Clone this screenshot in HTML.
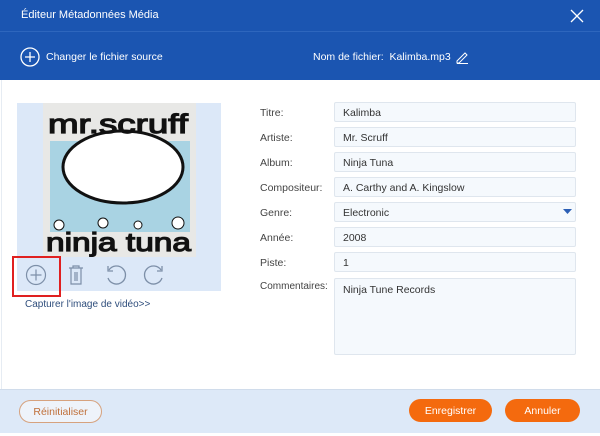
<!DOCTYPE html>
<html><head><meta charset="utf-8"><style>
*{margin:0;padding:0;box-sizing:border-box}
body{width:600px;height:436px;background:#fff;font-family:"Liberation Sans",sans-serif;position:relative;overflow:hidden;font-size:11px;color:#333}
.abs{position:absolute}
.hdr{left:0;top:0;width:600px;height:80px;background:#1b55b1}
.lbl{left:260px;font-size:10.5px;color:#444}
.inp{left:334px;width:242px;height:20px;border:1px solid #dfe6ee;background:#f5f9fd;border-radius:2px;padding:4px 8px;font-size:10.5px;color:#333}
.btn{border-radius:12px;font-size:10.5px;height:23px;display:flex;align-items:center;justify-content:center}
</style></head><body>
<div class="abs hdr"></div>
<div class="abs" style="left:0;top:31px;width:600px;height:1px;background:#2e66bd"></div>
<div class="abs" style="left:21px;top:9px;color:#fff;font-size:11px">Éditeur Métadonnées Média</div>
<svg class="abs" style="left:570px;top:9px" width="14" height="14"><path d="M1 1L13 13M13 1L1 13" stroke="#fff" stroke-width="1.3"/></svg>
<svg class="abs" style="left:20px;top:47px" width="20" height="20"><circle cx="10" cy="10" r="9" fill="none" stroke="#fff" stroke-width="1.3"/><path d="M10 5V15M5 10H15" stroke="#fff" stroke-width="1.3"/></svg>
<div class="abs" style="left:46px;top:51px;color:#fff;font-size:10.5px">Changer le fichier source</div>
<div class="abs" style="left:313px;top:51px;color:#fff;font-size:10.5px">Nom de fichier:&nbsp; Kalimba.mp3</div>
<svg class="abs" style="left:455px;top:50px" width="14" height="14"><path d="M2 11L10 3L12 5L4 13L2 13Z" fill="none" stroke="#fff" stroke-width="1"/><path d="M2 13.5H13" stroke="#fff"/></svg>
<div class="abs" style="left:1px;top:80px;width:1px;height:310px;background:#e6ecf3"></div>

<div class="abs" style="left:17px;top:103px;width:204px;height:188px;background:#dce8f8"></div>
<div class="abs" style="left:43px;top:103px;width:153px;height:154px;background:#e8e8e6"></div>
<div class="abs" style="left:50px;top:141px;width:140px;height:91px;background:#a9d3e3"></div>
<svg class="abs" style="left:43px;top:103px" width="153" height="154">
<ellipse cx="80" cy="64" rx="60" ry="36" fill="#fff" stroke="#111" stroke-width="3"/>
<circle cx="16" cy="122" r="5" fill="#fff" stroke="#111"/><circle cx="60" cy="120" r="5" fill="#fff" stroke="#111"/><circle cx="95" cy="122" r="4" fill="#fff" stroke="#111"/><circle cx="135" cy="120" r="6" fill="#fff" stroke="#111"/>
<text x="5" y="30" font-family="Liberation Sans" font-size="27" stroke="#111" stroke-width="1.2" fill="#111" textLength="140" lengthAdjust="spacingAndGlyphs">mr.scruff</text>
<text x="3" y="148" font-family="Liberation Sans" font-size="26" stroke="#111" stroke-width="1.2" fill="#111" textLength="145" lengthAdjust="spacingAndGlyphs">ninja tuna</text>
</svg>
<div class="abs" style="left:12px;top:256px;width:49px;height:41px;border:2px solid #e02020"></div>
<svg class="abs" style="left:25px;top:264px" width="22" height="22"><circle cx="11" cy="11" r="9.5" fill="none" stroke="#7d8fa8" stroke-width="1.2"/><path d="M11 5.5V16.5M5.5 11H16.5" stroke="#7d8fa8" stroke-width="1.2"/></svg>
<svg class="abs" style="left:66px;top:264px" width="20" height="22"><path d="M3 4H17M7 4V2H13V4M5 4V20H15V4M9 8V17M11 8V17" fill="none" stroke="#7d8fa8" stroke-width="1.2"/></svg>
<svg class="abs" style="left:104px;top:264px" width="24" height="22"><path d="M5 6A9 9 0 1 1 4 14" fill="none" stroke="#7d8fa8" stroke-width="1.3"/><path d="M4 2V7H9" fill="none" stroke="#7d8fa8" stroke-width="1.3"/></svg>
<svg class="abs" style="left:142px;top:264px" width="24" height="22"><path d="M19 6A9 9 0 1 0 20 14" fill="none" stroke="#7d8fa8" stroke-width="1.3"/><path d="M20 2V7H15" fill="none" stroke="#7d8fa8" stroke-width="1.3"/></svg>
<div class="abs" style="left:25px;top:299px;font-size:10px;color:#2f4e7c">Capturer l'image de vidéo&gt;&gt;</div>

<div class="abs lbl" style="top:107px">Titre:</div><div class="abs inp" style="top:102px">Kalimba</div>
<div class="abs lbl" style="top:132px">Artiste:</div><div class="abs inp" style="top:127px">Mr. Scruff</div>
<div class="abs lbl" style="top:157px">Album:</div><div class="abs inp" style="top:152px">Ninja Tuna</div>
<div class="abs lbl" style="top:182px">Compositeur:</div><div class="abs inp" style="top:177px">A. Carthy and A. Kingslow</div>
<div class="abs lbl" style="top:207px">Genre:</div><div class="abs inp" style="top:202px">Electronic</div>
<svg class="abs" style="left:563px;top:209px" width="9" height="6"><path d="M0 0H9L4.5 5Z" fill="#2c5fb5"/></svg>
<div class="abs lbl" style="top:232px">Année:</div><div class="abs inp" style="top:227px">2008</div>
<div class="abs lbl" style="top:257px">Piste:</div><div class="abs inp" style="top:252px">1</div>
<div class="abs lbl" style="top:281px;font-size:10px">Commentaires:</div><div class="abs inp" style="top:278px;height:77px;padding-top:5px">Ninja Tune Records</div>

<div class="abs" style="left:0;top:389px;width:600px;height:44px;background:#dde9f8;border-top:1px solid #d0dceb"></div>
<div class="abs btn" style="left:19px;top:400px;width:83px;border:1px solid #d6a27e;color:#c0703a;background:#eef3fa">Réinitialiser</div>
<div class="abs btn" style="left:409px;top:399px;width:83px;background:#f46a0e;color:#fff">Enregistrer</div>
<div class="abs btn" style="left:505px;top:399px;width:75px;background:#f46a0e;color:#fff">Annuler</div>
</body></html>
